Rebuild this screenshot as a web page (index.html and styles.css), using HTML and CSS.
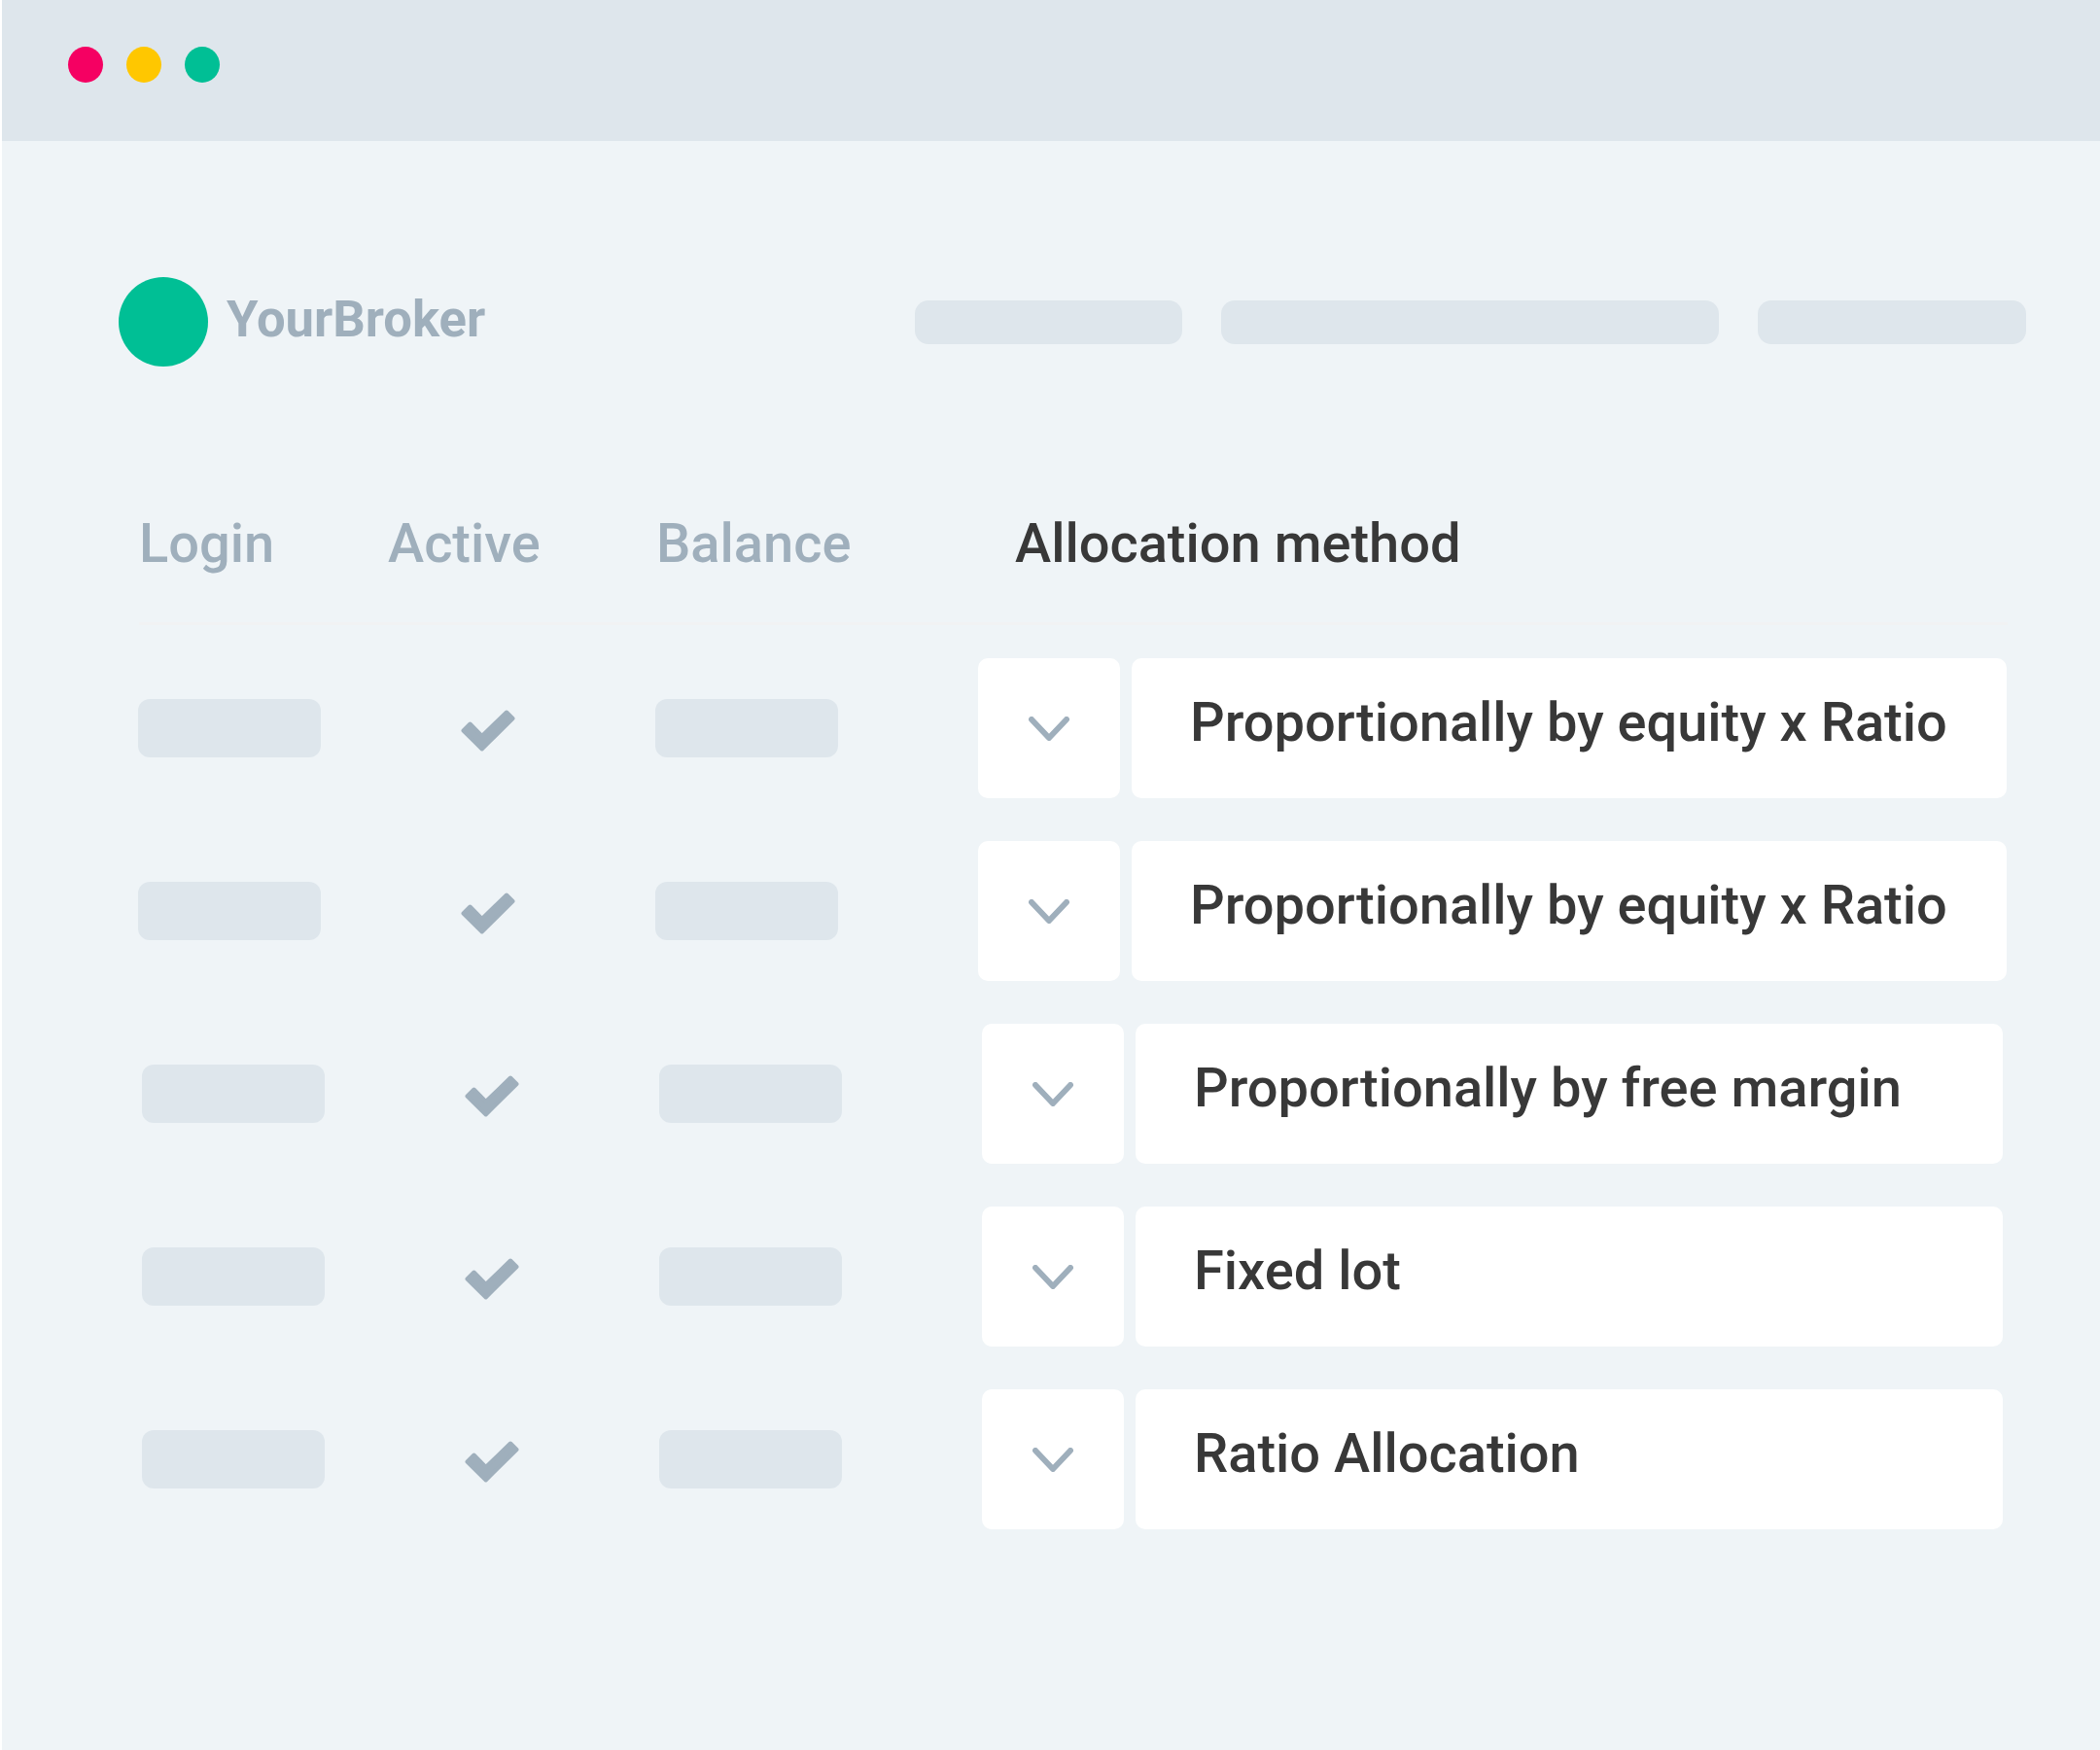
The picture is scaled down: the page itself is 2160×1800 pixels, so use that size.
FILE: index.html
```html
<!DOCTYPE html>
<html>
<head>
  <title>YourBroker</title>
  <link rel="stylesheet" href="styles.css">
</head>
<body>
  <div class="window">
    <div class="titlebar">
      <span class="dot dot-red"></span>
      <span class="dot dot-yellow"></span>
      <span class="dot dot-green"></span>
    </div>

    <div class="brandbar">
      <span class="logo"></span>
      <span class="brand">YourBroker</span>
      <div class="nav">
        <span class="bar bar-first"></span>
        <span class="bar bar-long"></span>
        <span class="bar bar-last"></span>
      </div>
    </div>

    <div class="table-head">
      <div class="th th-login">Login</div>
      <div class="th th-active">Active</div>
      <div class="th th-balance">Balance</div>
      <div class="th th-method">Allocation method</div>
    </div>

    <div class="row">
      <span class="cell-bar"></span>
      <svg class="check" viewBox="0 0 56 43"><polygon points="2.5,21.5 9.5,14.5 21.7,27 47,2.5 53.5,9 21.7,40.5"/></svg>
      <span class="cell-bar"></span>
      <div class="select">
        <div class="select-btn"><svg class="chevron" viewBox="0 0 42 25"><polyline points="3,3 21,22 39,3"/></svg></div>
        <div class="select-value">Proportionally by equity x Ratio</div>
      </div>
    </div>

    <div class="row">
      <span class="cell-bar"></span>
      <svg class="check" viewBox="0 0 56 43"><polygon points="2.5,21.5 9.5,14.5 21.7,27 47,2.5 53.5,9 21.7,40.5"/></svg>
      <span class="cell-bar"></span>
      <div class="select">
        <div class="select-btn"><svg class="chevron" viewBox="0 0 42 25"><polyline points="3,3 21,22 39,3"/></svg></div>
        <div class="select-value">Proportionally by equity x Ratio</div>
      </div>
    </div>

    <div class="row row-inset">
      <span class="cell-bar"></span>
      <svg class="check" viewBox="0 0 56 43"><polygon points="2.5,21.5 9.5,14.5 21.7,27 47,2.5 53.5,9 21.7,40.5"/></svg>
      <span class="cell-bar"></span>
      <div class="select">
        <div class="select-btn"><svg class="chevron" viewBox="0 0 42 25"><polyline points="3,3 21,22 39,3"/></svg></div>
        <div class="select-value">Proportionally by free margin</div>
      </div>
    </div>

    <div class="row row-inset">
      <span class="cell-bar"></span>
      <svg class="check" viewBox="0 0 56 43"><polygon points="2.5,21.5 9.5,14.5 21.7,27 47,2.5 53.5,9 21.7,40.5"/></svg>
      <span class="cell-bar"></span>
      <div class="select">
        <div class="select-btn"><svg class="chevron" viewBox="0 0 42 25"><polyline points="3,3 21,22 39,3"/></svg></div>
        <div class="select-value">Fixed lot</div>
      </div>
    </div>

    <div class="row row-inset">
      <span class="cell-bar"></span>
      <svg class="check" viewBox="0 0 56 43"><polygon points="2.5,21.5 9.5,14.5 21.7,27 47,2.5 53.5,9 21.7,40.5"/></svg>
      <span class="cell-bar"></span>
      <div class="select">
        <div class="select-btn"><svg class="chevron" viewBox="0 0 42 25"><polyline points="3,3 21,22 39,3"/></svg></div>
        <div class="select-value">Ratio Allocation</div>
      </div>
    </div>
  </div>
</body>
</html>
```

FILE: styles.css
```css
* { box-sizing: border-box; }
html, body { height: 100%; }
body {
  margin: 0;
  background: #ffffff;
  font-family: Roboto, sans-serif;
}
.window {
  margin-left: 2px;
  height: 1800px;
  background: #eff4f7;
}

.titlebar {
  display: flex;
  gap: 24px;
  height: 145px;
  padding: 48px 0 0 68px;
  background: #dee6ec;
}
.dot {
  width: 36px;
  height: 37px;
  border-radius: 50%;
}
.dot-red { background: #f50062; }
.dot-yellow { background: #ffc700; }
.dot-green { background: #00bf95; }

.brandbar {
  display: flex;
  align-items: center;
  height: 92px;
  margin-top: 140px;
  padding: 0 76px 0 120px;
}
.logo {
  flex: none;
  width: 92px;
  height: 92px;
  margin-right: 19px;
  border-radius: 50%;
  background: #00bf95;
}
.brand {
  padding-bottom: 6px;
  font-size: 52.6px;
  font-weight: 700;
  color: #9fafbc;
}
.nav {
  display: flex;
  gap: 40px;
  margin-left: auto;
}
.bar {
  height: 45px;
  border-radius: 14px;
  background: #dee6ec;
}
.bar-first { width: 275px; }
.bar-long { width: 512px; }
.bar-last { width: 276px; }

.table-head {
  display: flex;
  height: 117px;
  margin: 149px 95px 0 141px;
  border-bottom: 3px solid #f1f2f3;
  font-size: 56px;
  font-weight: 500;
  line-height: 66px;
}
.th { color: #9fafbc; }
.th-login { width: 256px; }
.th-active { width: 276px; }
.th-balance { width: 369px; }
.th-method { color: #383838; }

.row {
  display: flex;
  align-items: center;
  gap: 144px;
  height: 144px;
  margin-top: 44px;
  padding: 0 96px 0 140px;
}
.table-head + .row { margin-top: 34px; }
.row-inset { padding: 0 100px 0 144px; }
.cell-bar {
  flex: none;
  width: 188px;
  height: 60px;
  border-radius: 12px;
  background: #dee6ec;
}
.check {
  flex: none;
  width: 56px;
  height: 43px;
  margin-top: 5px;
}
.check polygon {
  fill: #9fafbc;
  stroke: #9fafbc;
  stroke-width: 4;
  stroke-linejoin: round;
}
.select {
  display: flex;
  flex: 1;
  gap: 12px;
  height: 144px;
}
.select-btn {
  display: flex;
  flex: none;
  align-items: center;
  justify-content: center;
  width: 146px;
  border-radius: 10px;
  background: #ffffff;
}
.chevron {
  width: 42px;
  height: 25px;
}
.chevron polyline {
  fill: none;
  stroke: #9fafbc;
  stroke-width: 6;
  stroke-linecap: round;
  stroke-linejoin: round;
}
.select-value {
  flex: 1;
  padding: 33px 0 0 60px;
  border-radius: 10px;
  background: #ffffff;
  font-size: 56px;
  font-weight: 500;
  line-height: 66px;
  color: #383838;
}
```
